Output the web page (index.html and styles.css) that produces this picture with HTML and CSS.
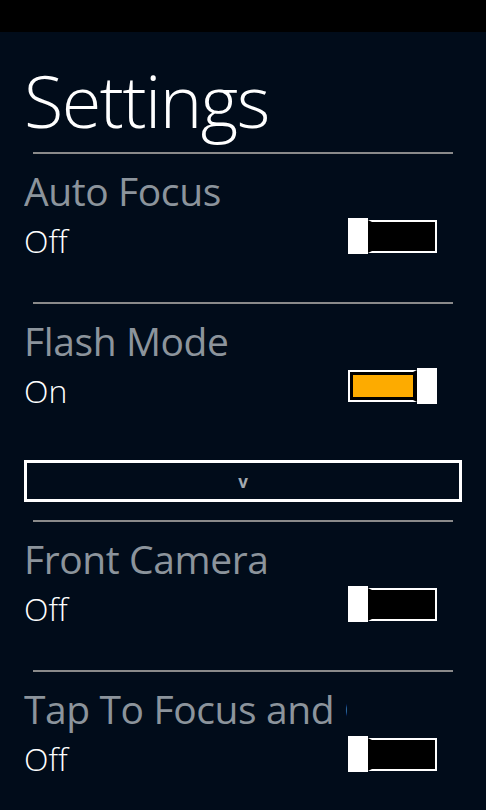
FILE: index.html
```html
<!DOCTYPE html>
<html lang="en">
<head>
<meta charset="utf-8">
<title>Settings</title>
<link rel="stylesheet" href="styles.css">
</head>
<body>
<div class="statusbar"></div>
<main class="page">
  <h1 class="title">Settings</h1>

  <section class="setting">
    <div class="rule"></div>
    <div class="label">Auto Focus</div>
    <div class="row">
      <span class="value">Off</span>
      <div class="toggle">
        <div class="thumb"></div>
        <div class="track-off"></div>
      </div>
    </div>
  </section>

  <section class="setting setting-expand">
    <div class="rule"></div>
    <div class="label">Flash Mode</div>
    <div class="row">
      <span class="value">On</span>
      <div class="toggle">
        <div class="track-on"><div class="fill"></div></div>
        <div class="thumb"></div>
      </div>
    </div>
    <div class="picker"><span class="chev">v</span></div>
  </section>

  <section class="setting">
    <div class="rule"></div>
    <div class="label">Front Camera</div>
    <div class="row">
      <span class="value">Off</span>
      <div class="toggle">
        <div class="thumb"></div>
        <div class="track-off"></div>
      </div>
    </div>
  </section>

  <section class="setting">
    <div class="rule"></div>
    <div class="label">Tap To Focus and Capture</div>
    <div class="row">
      <span class="value">Off</span>
      <div class="toggle">
        <div class="thumb"></div>
        <div class="track-off"></div>
      </div>
    </div>
  </section>
</main>
</body>
</html>
```
FILE: styles.css
```css
html, body {
  margin: 0;
  padding: 0;
}
body {
  width: 486px;
  height: 810px;
  overflow: hidden;
  background: #010c1a;
  font-family: "Open Sans", "Noto Sans", sans-serif;
  color: #ffffff;
}
.statusbar {
  height: 32px;
  background: #000000;
}
.page {
  padding: 0 24px;
}
.title {
  margin: 32px 0 0 0;
  font-size: 72px;
  line-height: 72px;
  font-weight: 300;
  letter-spacing: -1.5px;
  color: #ffffff;
  height: 72px;
}
.setting {
  height: 150px;
  box-sizing: border-box;
}
.setting:first-of-type {
  margin-top: 16px;
}
.setting-expand {
  height: 218px;
}
.rule {
  margin-left: 9px;
  width: 420px;
  height: 2px;
  background: #8a8a8a;
}
.label {
  margin-top: 10px;
  width: 323px;
  height: 54px;
  font-size: 39px;
  line-height: 54px;
  letter-spacing: -0.4px;
  color: #8c949c;
  white-space: nowrap;
  overflow: hidden;
}
.row {
  display: flex;
  justify-content: space-between;
  align-items: flex-start;
  width: 413px;
  height: 36px;
}
.value {
  font-size: 32px;
  line-height: 36px;
  font-weight: 300;
  margin-top: 5px;
}
.toggle {
  display: flex;
  align-items: center;
  width: 89px;
  height: 36px;
}
.thumb {
  width: 20px;
  height: 36px;
  background: #ffffff;
  flex: none;
}
.track-off {
  box-sizing: border-box;
  width: 69px;
  height: 33px;
  background: #000000;
  border: 2px solid #ffffff;
  border-left: 4px solid #000000;
  flex: none;
}
.track-on {
  box-sizing: border-box;
  display: flex;
  width: 69px;
  height: 32px;
  background: #000000;
  border: 2px solid #ffffff;
  border-right: 4px solid #000000;
  padding: 3px 0 3px 3px;
  flex: none;
}
.fill {
  flex: 1;
  background: #fdab00;
}
.picker {
  box-sizing: border-box;
  margin-top: 56px;
  width: 438px;
  height: 42px;
  border: 3px solid #ffffff;
  display: flex;
  align-items: center;
  justify-content: center;
}
.chev {
  font-size: 17px;
  font-weight: 700;
  color: #a3a9b0;
  line-height: 1;
}
```
